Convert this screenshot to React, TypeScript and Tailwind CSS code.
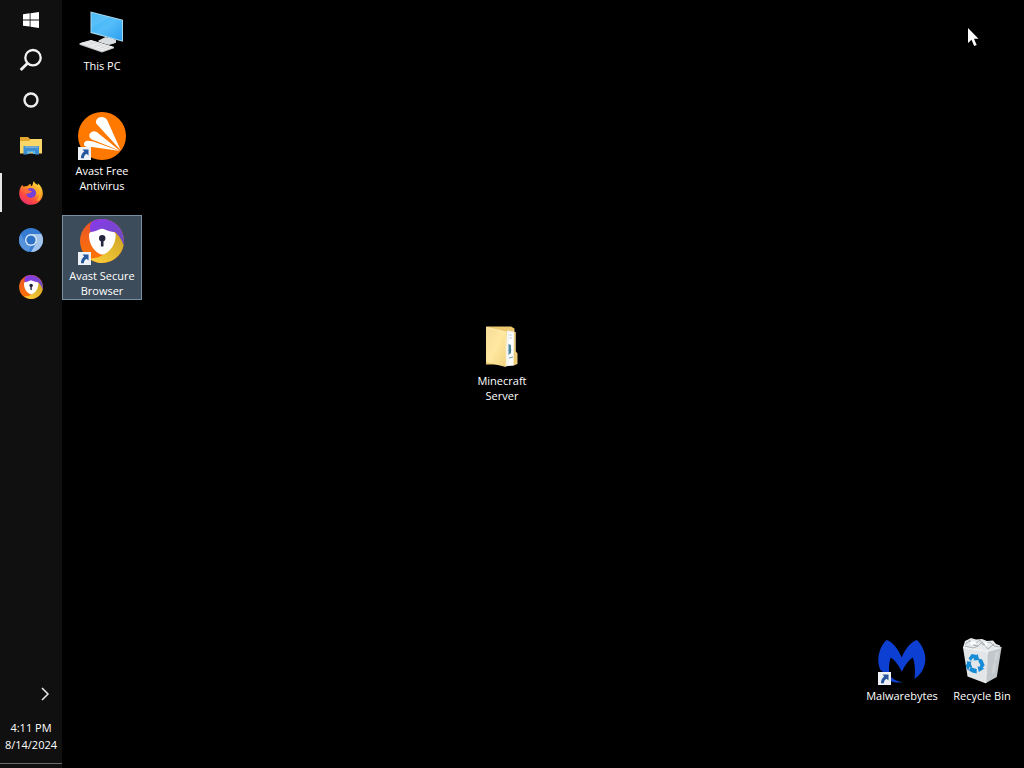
import type { ReactNode } from "react";

function ShortcutBadge() {
  return (
    <svg viewBox="0 0 13 13" className="absolute bottom-0 left-0 h-[13px] w-[13px]" aria-hidden="true">
      <rect width="13" height="13" fill="#eef1f6" />
      <path d="M4.500 2.500h6v6L8.600 6.700C6.800 7.800 6 9 5.800 11.200H3C2.800 8.300 4 6.200 6.300 4.500z" fill="#25559b" />
    </svg>
  );
}

function ThisPcIcon() {
  return (
    <svg viewBox="0 0 48 48" className="h-12 w-12" aria-hidden="true">
      <defs>
        <linearGradient id="pcScreen" x1="0" y1="0" x2="1" y2="1">
          <stop offset="0" stopColor="#36b4f6" />
          <stop offset=".5" stopColor="#55bdf9" />
          <stop offset="1" stopColor="#2d9ff0" />
        </linearGradient>
      </defs>
      <path d="M30 30l6 1.500v5l-6-1z" fill="#b8c0c5" />
      <path d="M20.500 33.500l7-3.500 10.500 2.800v3l-7 2.200-10.500-3z" fill="#d9dddf" />
      <path d="M12.500 4.500l32.500 8.300v22L12.500 26z" fill="#a9d8ec" />
      <path d="M13.500 5.800l30.500 7.700v20L13.500 25z" fill="url(#pcScreen)" />
      <path d="M13.500 5.800l18 4.500L13.500 21z" fill="#fff" opacity=".1" />
      <path d="M1.500 36.500L13 33.200 36 40v1.300L24 45.500 1.500 37.800z" fill="#c5c8ca" />
      <path d="M1.500 36.200L13 33 36 40 24 44.300z" fill="#f3f3f3" />
      <path d="M5 36.500l8-2.500 19 6-8 2.700zM8.500 35.500l19 6M11 34.700l19 6M9.500 38l8-2.500M15.500 40l8-2.500M20.500 41.600l8-2.500" fill="none" stroke="#d2d4d6" strokeWidth=".6" />
    </svg>
  );
}

function AvastIcon() {
  return (
    <svg viewBox="0 0 48 48" className="h-12 w-12" aria-hidden="true">
      <circle cx="24" cy="24" r="24" fill="#ff7800" />
      <path d="M18.400 11.800C16.200 7.200 22.600 2.700 27.500 6.300c1.700 1.200 2.300 2.900 3.100 5L42.700 38.200z" fill="#fff" />
      <path d="M12.300 26.300c-3-3.800 1.500-8.700 6.300-6.300 1.300.6 2.200 1.700 3.200 2.600L42 38.800 16 28.300c-1.600-.5-2.800-.9-3.700-2z" fill="#fff" />
      <path d="M7.700 34.500c-3.400-1.700-1.600-6.300 2.500-5.800l5.100.7L41.800 39.100 14.300 35c-1.700 0-5.300.1-6.600-.5z" fill="#fff" />
    </svg>
  );
}

function SecureBrowserIcon({ id, className }: { id: string; className: string }) {
  return (
    <svg viewBox="0 0 48 48" className={className} aria-hidden="true">
      <defs>
        <linearGradient id={id + "o"} x1="0" y1="0" x2="0" y2="1">
          <stop offset="0" stopColor="#e8542c" />
          <stop offset="1" stopColor="#ff7600" />
        </linearGradient>
        <linearGradient id={id + "p"} x1="0" y1="0" x2="1" y2="1">
          <stop offset="0" stopColor="#8a38ee" />
          <stop offset="1" stopColor="#6a51b5" />
        </linearGradient>
        <linearGradient id={id + "y"} x1="1" y1="0" x2="0" y2="1">
          <stop offset="0" stopColor="#cba322" />
          <stop offset="1" stopColor="#ffd23e" />
        </linearGradient>
      </defs>
      <circle cx="24" cy="24" r="22" fill={"url(#" + id + "o)"} />
      <path d="M14 4.500A22 22 0 0 1 46 24c0 1.500-.2 3-.5 4.500L37 15H12.500C11.500 11 11.500 8 14 4.500z" fill={"url(#" + id + "p)"} />
      <path d="M37 15c4 3.200 7 8 8.500 13.500A22 22 0 0 1 10.500 41.300c8 .7 14-2.300 18-6.300z" fill={"url(#" + id + "y)"} />
      <path d="M14.500 14.700C18 14.300 20 13 22.500 12q1.500-.6 3 0c2.500 1 5 2.300 8.500 2.700 2.700.3 3.800 1.300 3.700 3.500-.4 9.500-4.900 15.800-11.700 19-1.200.5-2.300.5-3.500 0C15.700 34 11.200 27.700 11 18.200c0-2.200 1-3.200 3.500-3.500z" fill="#fff" />
      <circle cx="24.200" cy="21.300" r="3.200" fill="#25253f" />
      <path d="M22.900 22h2.600v7.500h-2.600z" fill="#25253f" />
    </svg>
  );
}

function FolderIcon() {
  return (
    <svg viewBox="0 0 48 48" className="h-12 w-12" aria-hidden="true">
      <defs>
        <linearGradient id="folderFront" x1="0" y1="0" x2="1" y2="1">
          <stop offset="0" stopColor="#f5dc9a" />
          <stop offset=".5" stopColor="#ffe8a0" />
          <stop offset="1" stopColor="#f0d17e" />
        </linearGradient>
      </defs>
      <path d="M8 4.500h25l3.500 2v36H8z" fill="#edc871" />
      <path d="M29 8.500l8.500 1.500V43l-10.500 1.500z" fill="#f4f4f4" />
      <path d="M36 10h1.500v19l2 2.500V42l-4.500 1.500z" fill="#edcc77" />
      <path d="M31 11h4.500v32.500H31z" fill="#fff" />
      <path d="M31.500 13h2M31.500 16h2" stroke="#a2b6c6" />
      <path d="M30.500 22l2.500 1v8l-2.500 2z" fill="#4d879d" />
      <path d="M32 24v6M30.500 28h3M31 36l4-1" stroke="#4a8594" strokeWidth=".8" />
      <path d="M8 5l20 5v35L9.500 40.500 8 39z" fill="url(#folderFront)" />
      <path d="M9 5.500L28 10v34" fill="none" stroke="#fff0bd" strokeWidth=".7" />
    </svg>
  );
}

function MalwarebytesIcon() {
  return (
    <svg viewBox="0 0 48 48" className="h-12 w-12" aria-hidden="true">
      <path d="M8.500 3C14 4.700 19.800 11 23.700 20.500 27.500 11 33.500 4.500 39 3c7.400 7.500 10.500 18 6.800 27.300C43.700 36 40.500 39 36.500 42c.8-7.200.8-14.500-1.700-21.500-4.100 2.400-7.700 7.400-11 14.300-3.200-6.900-7-11.700-11.200-14.300-2 7-2 14-.8 19.500L2.500 33C-2 24 .5 11 8.500 3z" fill="#0c3fd2" />
      <path d="M11 38c3.500 4 7.500 6.300 13.500 7.300-5.500.8-10 0-13.500-2z" fill="#0c3fd2" />
    </svg>
  );
}

function RecycleBinIcon() {
  return (
    <svg viewBox="0 0 48 48" className="h-12 w-12" aria-hidden="true">
      <path d="M5 10.500L7 4l6-3 5 1.500 6-.5 5 2 6-.5 3 3.500 4 1.500 1 4-8 5-20-1z" fill="#e7e9eb" />
      <path d="M7 7l5-3 4 4 6-5 3 5 7-3 4 4 6 1M11 3l4 5 5 1 4-4 6 7 6-5M7 9l8 2 5-2" fill="none" stroke="#a9b0b5" strokeWidth="1" />
      <path d="M12 5l4-1 3 3-6 1zM26 5l4 1-2 4z" fill="#fff" />
      <path d="M5 10.500l24.500 4L28 46 9.500 39z" fill="#e3e6e8" />
      <path d="M29.500 14.500l14-4L38.800 40 28 46z" fill="#c2c7cb" />
      <path d="M37 16l4-2-2 9-3 2zM35 27l3-2-1 10-3 2z" fill="#cfd3d6" />
      <path d="M5 10.500l24.500 4 14-4M29.500 14.500L28 46M9.500 39L28 46" fill="none" stroke="#f8f9f9" strokeWidth=".8" />
      <path d="M10.500 21.500l3.200-4.500 5 .9 1-1.200 1.500 6.300-6 .5 1.200-1.800-1.600-.4-1.900 2.600zM21.500 21.500l2.800 1.300 2.400 5.500-2.200 2.700 2 .5-5.700 3.600-1.300-6 1.700 1 1.200-2-2-3.600zM8.500 24.200l5.200.6-1 1.500 1.500 4.200-2.800-.3-1.200 3.500-2.500-4.800 1.500-3.200zM11 33.500l1.400-3.300 6.300 1.700v4.500l-4.500-.9z" fill="#168bd6" />
    </svg>
  );
}

function WindowsLogo() {
  return (
    <svg viewBox="0 0 16 16" className="h-4 w-4" fill="#fff" aria-hidden="true">
      <path d="M0 2.200L6.700 1.300v6.200H0zM7.500 1.200L16 0v7.500H7.500zM0 8.400h6.700v6.200L0 13.700zM7.500 8.400H16V16l-8.500-1.200z" />
    </svg>
  );
}

function SearchGlyph() {
  return (
    <svg viewBox="0 0 24 24" className="h-6 w-6" fill="none" stroke="#f2f2f2" aria-hidden="true">
      <circle cx="14" cy="9.700" r="7.700" strokeWidth="2.300" />
      <path d="M8.500 15.200L1.700 22" strokeWidth="2.800" />
    </svg>
  );
}

function CortanaGlyph() {
  return (
    <svg viewBox="0 0 16 16" className="h-4 w-4" aria-hidden="true">
      <circle cx="8" cy="8" r="6.500" fill="none" stroke="#ededed" strokeWidth="2.400" />
    </svg>
  );
}

function ExplorerIcon() {
  return (
    <svg viewBox="0 0 24 24" className="h-6 w-6" aria-hidden="true">
      <path d="M1 3h8l2 2h12v14H1z" fill="#e3a62e" />
      <path d="M1 7h9l2-2h11v14.500H1z" fill="#fad567" />
      <path d="M4.500 12h15.500v8.500h-4v-3H8.500v3h-4z" fill="#3d8fd1" />
      <path d="M6 12h13v2H6z" fill="#72a8cd" />
      <path d="M8.500 17h7.500v3h-2v-1.500h-3.500V20h-2z" fill="#5db8e7" />
    </svg>
  );
}

function FirefoxIcon() {
  return (
    <svg viewBox="0 0 24 24" className="h-6 w-6" aria-hidden="true">
      <defs>
        <linearGradient id="foxBody" x1=".85" y1="0" x2=".2" y2="1">
          <stop offset="0" stopColor="#fff04d" />
          <stop offset=".38" stopColor="#ff9b22" />
          <stop offset=".7" stopColor="#ff493f" />
          <stop offset="1" stopColor="#e52875" />
        </linearGradient>
      </defs>
      <path d="M3.200 3.700c.3 1.100.8 1.500 1.500 1.900C6 5.300 7.100 5 8.500 4.900c1.100-1.300 2-2 3.500-2-.6 1.100-.3 1.700.3 2.200C14.500 4.200 13.300 1.800 15 0c.3 2.300 2.300 2.800 3.800 4.300.1-.9 0-1.400-.1-2.100C22 4.700 23.800 8.400 23.800 12.200A11.600 11.600 0 0 1 12 23.800C5.600 23.800.2 18.800.2 12.400c0-3.600 1.400-6.800 3-8.700z" fill="url(#foxBody)" />
      <circle cx="12" cy="12" r="5" fill="#7541d8" />
      <path d="M5 7.800c2.500-.4 4 .2 5 1.700l3 .4c-.2 1.200-1.400 1.500-2.400 2-1.500.5-2.300 1-4.100.6C5.200 11.600 5.300 9.400 5 7.800z" fill="#ff6a3b" />
      <path d="M13 5.500c3.500 1 6.100 3.400 5.600 7.900.8-1 1.300-2.300 1.300-4 2 3 1.500 7.500-1.300 10" fill="none" stroke="#ffb32d" strokeWidth="1.400" />
    </svg>
  );
}

function ChromiumIcon() {
  return (
    <svg viewBox="0 0 24 24" className="h-6 w-6" aria-hidden="true">
      <circle cx="12" cy="12" r="12" fill="#367bd2" />
      <path d="M12 6h10.400A12 12 0 0 1 12 24l5.200-9z" fill="#a3c4ea" />
      <path d="M1.600 6L6.800 15A6 6 0 0 0 12 18l-2 5.800A12 12 0 0 1 1.600 6z" fill="#5592db" />
      <circle cx="12" cy="12" r="6" fill="#dce9f6" />
      <circle cx="12" cy="12" r="4.600" fill="#2d72c7" />
    </svg>
  );
}

function TaskButton({ label, children, active = false }: { label: string; children: ReactNode; active?: boolean }) {
  return (
    <button
      type="button"
      aria-label={label}
      className={
        active
          ? "relative flex h-[47px] w-full items-center justify-center before:absolute before:inset-y-1 before:left-0 before:w-0.5 before:bg-[#e6e6e6]"
          : "flex h-[47px] w-full items-center justify-center"
      }
    >
      {children}
    </button>
  );
}

function SystemButton({ label, children }: { label: string; children: ReactNode }) {
  return (
    <button type="button" aria-label={label} className="flex h-10 w-full items-center justify-center">
      {children}
    </button>
  );
}

function Taskbar() {
  return (
    <nav aria-label="Taskbar" className="flex w-[62px] shrink-0 flex-col bg-[#101010]">
      <SystemButton label="Start"><WindowsLogo /></SystemButton>
      <SystemButton label="Search"><SearchGlyph /></SystemButton>
      <SystemButton label="Cortana"><CortanaGlyph /></SystemButton>
      <div className="flex flex-col pt-0.5">
        <TaskButton label="File Explorer"><ExplorerIcon /></TaskButton>
        <TaskButton label="Firefox" active><FirefoxIcon /></TaskButton>
        <TaskButton label="Chromium"><ChromiumIcon /></TaskButton>
        <TaskButton label="Avast Secure Browser">
          <SecureBrowserIcon id="taskAvast" className="h-[26px] w-[26px]" />
        </TaskButton>
      </div>
      <div className="mt-auto flex flex-col">
        <button type="button" aria-label="Show hidden icons" className="flex h-8 items-center justify-end pr-3">
          <svg viewBox="0 0 10 14" className="h-3.5 w-2.5" fill="none" stroke="#e8e8e8" strokeWidth="1.500" aria-hidden="true">
            <path d="M2 1l6 6-6 6" />
          </svg>
        </button>
        <button type="button" className="flex h-[53px] flex-col items-center justify-center whitespace-nowrap pb-0.5 text-[11px] leading-[17px] text-white">
          <span>4:11 PM</span>
          <span>8/14/2024</span>
        </button>
        <button type="button" aria-label="Show desktop" className="h-[5px] border-t border-[#6b6b6b]" />
      </div>
    </nav>
  );
}

type DesktopItemProps = {
  label: string;
  place: string;
  icon: ReactNode;
  shortcut?: boolean;
  selected?: boolean;
};

function DesktopItem({ label, place, icon, shortcut = false, selected = false }: DesktopItemProps) {
  return (
    <button
      type="button"
      className={`${place} flex w-20 flex-col items-center self-start border pt-px text-[11px] leading-[15px] text-white ${
        selected ? "border-[#7890a2] bg-[#3d4c5a] pb-px" : "border-transparent"
      }`}
    >
      <span className="relative mb-[3px] block">
        {icon}
        {shortcut && <ShortcutBadge />}
      </span>
      <span className="whitespace-pre-line">{label}</span>
    </button>
  );
}

function Desktop() {
  return (
    <main className="relative grid flex-1 grid-cols-[repeat(auto-fill,80px)] grid-rows-[repeat(7,105px)] pt-[5px]">
      <DesktopItem place="col-start-1 row-start-1" label="This PC" icon={<ThisPcIcon />} />
      <DesktopItem place="col-start-1 row-start-2" label={"Avast Free\nAntivirus"} icon={<AvastIcon />} shortcut />
      <DesktopItem
        place="col-start-1 row-start-3"
        label={"Avast Secure\nBrowser"}
        icon={<SecureBrowserIcon id="deskAvast" className="h-12 w-12" />}
        shortcut
        selected
      />
      <DesktopItem place="col-start-6 row-start-4" label={"Minecraft\nServer"} icon={<FolderIcon />} />
      <DesktopItem place="col-start-11 row-start-7" label="Malwarebytes" icon={<MalwarebytesIcon />} shortcut />
      <DesktopItem place="col-start-12 row-start-7" label="Recycle Bin" icon={<RecycleBinIcon />} />
      <svg viewBox="0 0 12 20" className="pointer-events-none absolute right-[45px] top-[27px] h-5 w-3" aria-hidden="true">
        <path d="M1 1v15l3.500-3.300L7.200 19l2.500-1.100L7 11.800h4.500z" fill="#fff" />
      </svg>
    </main>
  );
}

export default function App() {
  return (
    <div className="flex min-h-screen bg-black font-['Open_Sans','Noto_Sans',sans-serif]">
      <Taskbar />
      <Desktop />
    </div>
  );
}
